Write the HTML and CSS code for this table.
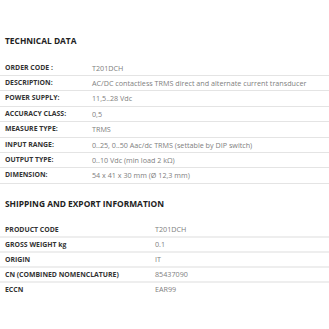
FILE: index.html
```html
<!DOCTYPE html>
<html>
<head>
<meta charset="utf-8">
<link rel="stylesheet" href="styles.css">
</head>
<body>
<section class="section tech">
  <h2 class="title">TECHNICAL DATA</h2>
  <table class="spec spec-tech">
    <tr><th>ORDER CODE :</th><td>T201DCH</td></tr>
    <tr><th>DESCRIPTION:</th><td>AC/DC contactless TRMS direct and alternate current transducer</td></tr>
    <tr><th>POWER SUPPLY:</th><td>11,5..28 Vdc</td></tr>
    <tr><th>ACCURACY CLASS:</th><td>0,5</td></tr>
    <tr><th>MEASURE TYPE:</th><td>TRMS</td></tr>
    <tr><th>INPUT RANGE:</th><td>0..25, 0..50 Aac/dc TRMS (settable by DIP switch)</td></tr>
    <tr><th>OUTPUT TYPE:</th><td>0..10 Vdc (min load 2 kΩ)</td></tr>
    <tr><th>DIMENSION:</th><td>54 x 41 x 30 mm (Ø 12,3 mm)</td></tr>
  </table>
</section>
<section class="section ship">
  <h2 class="title">SHIPPING AND EXPORT INFORMATION</h2>
  <table class="spec spec-ship">
    <tr><th>PRODUCT CODE</th><td>T201DCH</td></tr>
    <tr><th>GROSS WEIGHT kg</th><td>0.1</td></tr>
    <tr><th>ORIGIN</th><td>IT</td></tr>
    <tr><th>CN (COMBINED NOMENCLATURE)</th><td>85437090</td></tr>
    <tr><th>ECCN</th><td>EAR99</td></tr>
  </table>
</section>
</body>
</html>
```

FILE: styles.css
```css
html, body {
  margin: 0;
  padding: 0;
  background: #ffffff;
}
body {
  font-family: "Open Sans", "Liberation Sans", sans-serif;
  color: #333;
}
.section {
  padding: 0;
}
.tech {
  padding-top: 34px;
}
.ship {
  padding-top: 13px;
}
.title {
  margin: 0;
  padding-left: 5px;
  font-size: 8.4px;
  font-weight: 700;
  color: #222;
  line-height: 14px;
}
.spec {
  width: 100%;
  border-collapse: collapse;
  margin-top: 12.5px;
}
.spec th,
.spec td {
  text-align: left;
  padding: 0 0 0 5px;
  line-height: 14.4px;
  height: 14.4px;
  vertical-align: middle;
  white-space: nowrap;
}
.spec th {
  font-size: 6.9px;
  font-weight: 700;
  color: #333;
}
.spec td {
  font-size: 7.2px;
  font-weight: 400;
  color: #808080;
}
.spec-tech tr {
  border-bottom: 1px solid #e4e4e4;
}
.spec-tech th {
  width: 82px;
}
.spec-ship {
  margin-top: 12px;
}
.spec-ship tr {
  border-bottom: 2px solid #eeeeee;
}
.spec-ship tr:last-child {
  border-bottom: none;
}
.spec-ship th {
  width: 145px;
}
.spec-ship th, .spec-ship td {
  height: 13.1px;
  line-height: 13.1px;
}
```
